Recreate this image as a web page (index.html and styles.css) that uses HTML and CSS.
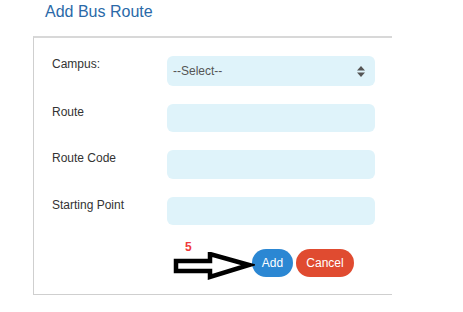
FILE: index.html
```html
<!DOCTYPE html>
<html>
<head>
  <title>Add Bus Route</title>
  <meta name="viewport" content="width=device-width, user-scalable=no">
  <link rel="stylesheet" href="styles.css">
</head>
<body>
  <h3 class="page-title">Add Bus Route</h3>
  <div class="card">
    <form class="route-form">
      <label class="field-label">Campus:</label>
      <div class="field select">
        <span>--Select--</span>
        <svg class="caret" width="8" height="11" viewBox="0 0 8 11"><path d="M4 0 L8 4.5 H0 Z M0 6.5 H8 L4 11 Z" fill="#555"/></svg>
      </div>
      <label class="field-label">Route</label>
      <div class="field"></div>
      <label class="field-label">Route Code</label>
      <div class="field tall"></div>
      <label class="field-label">Starting Point</label>
      <div class="field"></div>
    </form>
    <div class="actions">
      <span class="marker">5</span>
      <svg class="pointer" width="82" height="30" viewBox="0 0 82 30">
        <path d="M3 9 H37 V2 L76 13 L37 25 V19 H3 Z" fill="#fff" stroke="#000" stroke-width="4.5" stroke-linejoin="miter"/>
      </svg>
      <button class="btn btn-add" type="button">Add</button>
      <button class="btn btn-cancel" type="button">Cancel</button>
    </div>
  </div>
</body>
</html>
```

FILE: styles.css
```css
body {
  margin: 0;
  background: #fff;
  font-family: "Liberation Sans", Arial, sans-serif;
  color: #333;
}
.page-title {
  margin: 0;
  padding: 3px 0 0 45px;
  height: 36px;
  box-sizing: border-box;
  font-size: 16px;
  font-weight: normal;
  color: #2a69a8;
}
.card {
  position: relative;
  margin-left: 33px;
  width: 359px;
  height: 259px;
  box-sizing: border-box;
  border: 1px solid #cfcfcf;
  border-top: 2px solid #d8d8d8;
  border-right: none;
  padding: 18px 0 0 18px;
}
.route-form {
  display: grid;
  grid-template-columns: 115px 208px;
  row-gap: 18px;
}
.field-label {
  font-size: 12px;
  padding-top: 1px;
}
.field {
  height: 28px;
  border-radius: 6px;
  background: #dff3fa;
}
.field.tall {
  height: 29px;
}
.select {
  height: 30px;
  display: flex;
  align-items: center;
  justify-content: space-between;
  padding: 0 10px 0 6px;
  font-size: 12px;
  color: #555;
}
.actions {
  display: flex;
  gap: 3px;
  margin: 24px 0 0 200px;
}
.btn {
  height: 28px;
  border: none;
  border-radius: 14px;
  color: #fff;
  font-family: "Liberation Sans", Arial, sans-serif;
  font-size: 12px;
  padding: 0 9px;
}
.btn-add {
  width: 41px;
  background: #2b87d3;
}
.btn-cancel {
  width: 58px;
  background: #e04b30;
}
.marker {
  position: absolute;
  left: 151px;
  top: 202px;
  color: #f03a3a;
  font-size: 12px;
  font-weight: bold;
}
.pointer {
  position: absolute;
  left: 139px;
  top: 214px;
}
```
